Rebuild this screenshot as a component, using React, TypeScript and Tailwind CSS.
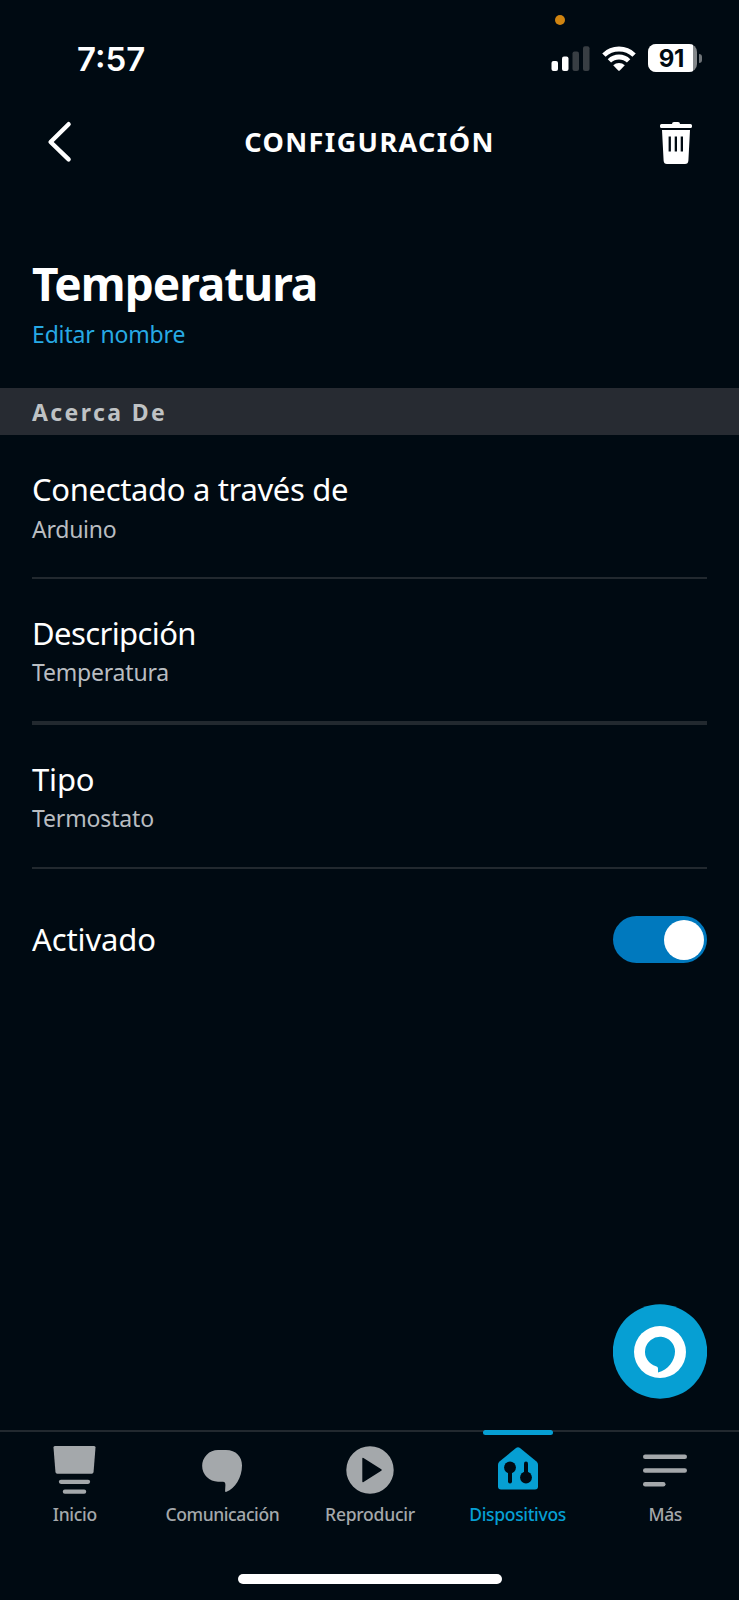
import React from "react";

const ember = "font-['Noto_Sans','Open_Sans',sans-serif]";

function StatusBar() {
  return (
    <div className="relative flex h-[118px] items-center pl-[77px] pr-[37px]">
      <span className="absolute left-[555px] top-[14.5px] size-[10px] rounded-full bg-[#d08410]" />
      <span className="flex-1 whitespace-nowrap font-['Inter',sans-serif] text-[33px] font-semibold leading-none tracking-[0px]">7:57</span>
      <svg className="mr-[12px]" width="39" height="26" viewBox="0 0 39 26">
        <rect x="0.5" y="15" width="6.5" height="10" rx="2" fill="#fff" />
        <rect x="11" y="10.5" width="6.5" height="14.5" rx="2" fill="#fff" />
        <rect x="21.5" y="5.5" width="6.5" height="19.5" rx="2" fill="#383e43" />
        <rect x="32" y="0.3" width="6.5" height="24.7" rx="2" fill="#383e43" />
      </svg>
      <svg className="mr-[12px]" width="34" height="26" viewBox="0 0 34 26">
        <g fill="none" stroke="#fff" strokeWidth="4.8">
          <path d="M1.9 9.1a21.7 21.7 0 0 1 30.2 0" />
          <path d="M7.4 14.9a13.8 13.8 0 0 1 19.2 0" />
        </g>
        <path d="M11.2 19.2a8.4 8.4 0 0 1 11.6 0L17.8 24.5Q17 25.2 16.2 24.5Z" fill="#fff" />
      </svg>
      <div className="mb-[2px] flex items-center">
        <div className="h-[28px] w-[49px] overflow-hidden rounded-[8px] bg-[#83878a]">
          <div className="flex h-full w-[45px] items-center justify-center bg-white pl-[2px] pt-[1px] font-['Inter',sans-serif] text-[24px] font-bold leading-none tracking-[-0.2px] text-[#000a12]">
            91
          </div>
        </div>
        <div className="ml-[2px] h-[9px] w-[3px] rounded-r-full bg-[#6f7478]" />
      </div>
    </div>
  );
}

function Header() {
  return (
    <header className="grid h-[48px] grid-cols-[100px_1fr_100px] items-center">
      <svg className="ml-[47px]" width="26" height="42" viewBox="0 0 26 42">
        <path d="M21.600 3.200 3.600 21 21.600 38.400" fill="none" stroke="#fff" strokeWidth="4.400" strokeLinecap="round" strokeLinejoin="round" />
      </svg>
      <h1 className="mb-[2px] text-center text-[27px] font-bold leading-none tracking-[1.4px]">CONFIGURACIÓN</h1>
      <svg className="ml-[21px] mt-[2px]" width="32" height="42" viewBox="0 0 32 42">
        <path fill="#fff" fillRule="evenodd" d="M12 2Q12 0 14 0H18Q20 0 20 2H30.500Q32 2 32 3.500V4.500Q32 6 30.500 6H1.500Q0 6 0 4.500V3.500Q0 2 1.500 2ZM2 8H30L28.400 38.500Q28.200 42 25 42H7Q3.800 42 3.600 38.500ZM8.600 14.500V29.500H10.900V14.500ZM14.700 14.500V29.500H17V14.500ZM20.700 14.500V29.500H23V14.500Z" />
      </svg>
    </header>
  );
}

function InfoRow({ label, value, className, labelClass, valueClass }: { label: string; value: string; className: string; labelClass: string; valueClass: string }) {
  return (
    <div className={`mx-[32px] border-[#22292f] pt-[34px] ${className}`}>
      <div className={`whitespace-nowrap text-[31px] leading-[40px] ${labelClass}`}>{label}</div>
      <div className={`whitespace-nowrap text-[23px] leading-[32px] text-[#b9bdc1] ${valueClass}`}>{value}</div>
    </div>
  );
}

function Tab({ label, children, active = false, labelClass }: { label: string; children: React.ReactNode; active?: boolean; labelClass: string }) {
  return (
    <div className={`relative flex flex-1 flex-col items-center ${active ? "text-[#069fd3]" : "text-[#a4a8ab]"}`}>
      {active && <span className="absolute -top-[2px] h-[5px] w-[70px] rounded-full bg-[#069fd3]" />}
      <div className="mt-[13px] flex h-[50px] items-center justify-center">{children}</div>
      <div className={`mt-[7px] whitespace-nowrap text-[17.5px] font-medium leading-[24px] ${labelClass}`}>{label}</div>
    </div>
  );
}

export default function App() {
  return (
    <div className={`flex h-[1600px] w-[739px] flex-col bg-[#000a12] text-white ${ember}`}>
      <StatusBar />
      <Header />
      <main className="flex flex-1 flex-col">
        <section className="px-[32px] pt-[92px]">
          <h2 className="whitespace-nowrap text-[46px] font-bold leading-[50px] tracking-[-1px]">Temperatura</h2>
          <div className="mt-[10px] whitespace-nowrap text-[23px] leading-[32px] tracking-[-0.16px] text-[#27a9e4]">Editar nombre</div>
        </section>
        <div className="mt-[38px] flex h-[47px] items-center bg-[#272b32] px-[32px] pt-px text-[23px] font-bold tracking-[2.4px] text-[#bfc2c4]">Acerca De</div>
        <InfoRow label="Conectado a través de" value="Arduino" className="h-[144px] border-b-2" labelClass="tracking-[-0.34px]" valueClass="mt-[4px] tracking-[-0.25px]" />
        <InfoRow label="Descripción" value="Temperatura" className="h-[146px] border-b-4" labelClass="tracking-[-0.6px]" valueClass="mt-[3px] tracking-[-0.2px]" />
        <InfoRow label="Tipo" value="Termostato" className="h-[144px] border-b-2" labelClass="tracking-[-0.15px]" valueClass="mt-[3px] tracking-[-0.15px]" />
        <div className="mx-[32px] flex h-[141px] items-center justify-between">
          <span className="mb-px text-[31px] tracking-[-0.12px]">Activado</span>
          <div className="flex h-[47px] w-[94px] items-center justify-end rounded-full bg-[#0079be] pr-[3.5px]">
            <span className="size-[40px] rounded-full bg-white" />
          </div>
        </div>
        <div className="mb-[31px] mr-[32px] mt-auto self-end">
          <svg width="94" height="95" viewBox="0 0 94 95">
            <circle cx="47" cy="47.500" r="47.200" fill="#069fd3" />
            <circle cx="47" cy="48" r="26" fill="#fff" />
            <path d="M45 68.500V64.500Q45 62.600 43 62.200A15 15 0 1 1 62 47.500C62 56.500 55 66 45 68.500Z" fill="#069fd3" />
          </svg>
        </div>
      </main>
      <nav className="flex h-[144px] border-t-2 border-[#22292f] pl-px">
        <Tab label="Inicio" labelClass="tracking-[-0.3px]">
          <svg width="43" height="48" viewBox="0 0 44 48" preserveAspectRatio="none" fill="currentColor">
            <path d="M2 0H42Q43.600 0 43.500 1.600L41.500 26Q41.300 27.800 39.600 27.800H4.400Q2.700 27.800 2.500 26L.5 1.600Q.4 0 2 0Z" />
            <rect x="6" y="33.700" width="32" height="4.200" rx="2.100" />
            <rect x="10" y="43.600" width="24" height="4.200" rx="2.100" />
          </svg>
        </Tab>
        <Tab label="Comunicación" labelClass="tracking-[-0.4px]">
          <svg className="mt-[2px]" width="40" height="42" viewBox="0 0 40 42" fill="currentColor">
            <path d="M16 0H24C34 0 40 6.500 40 15.500C40 27.500 33 38.500 24.500 41.800Q23 42.300 23.100 40.800L23.400 35Q23.400 31.700 21 31.700H16A15.850 15.850 0 0 1 16 0Z" />
          </svg>
        </Tab>
        <Tab label="Reproducir" labelClass="tracking-[-0.25px]">
          <svg width="48" height="48" viewBox="0 0 48 48" fill="currentColor">
            <path fillRule="evenodd" d="M24 .3A23.700 23.700 0 1 0 24 47.700A23.700 23.700 0 1 0 24 .3ZM16.300 12.700Q16.300 11.300 17.500 12L35.300 23.200Q36.400 24 35.300 24.800L17.500 36Q16.300 36.700 16.300 35.300Z" />
          </svg>
        </Tab>
        <Tab label="Dispositivos" active labelClass="tracking-[-0.32px]">
          <svg className="-mt-[3px]" width="40" height="43" viewBox="0 0 40 43">
            <path d="M18 1Q20 -.5 22 1L38.500 14.500Q40 15.800 40 17.500V39.500Q40 42.500 37 42.500H3Q0 42.500 0 39.500V17.500Q0 15.800 1.500 14.500Z" fill="currentColor" />
            <g fill="#000a12">
              <circle cx="12" cy="20.500" r="5.900" />
              <rect x="10" y="20" width="4" height="16.500" rx="2" />
              <circle cx="28" cy="30.500" r="5.900" />
              <rect x="26" y="14.500" width="4" height="16.500" rx="2" />
            </g>
          </svg>
        </Tab>
        <Tab label="Más" labelClass="tracking-[-0.4px]">
          <svg width="44" height="33" viewBox="0 0 44 33" fill="currentColor">
            <rect x="0" y=".5" width="44" height="4.400" rx="2.200" />
            <rect x="0" y="14.300" width="44" height="4.400" rx="2.200" />
            <rect x="0" y="28" width="22.500" height="4.400" rx="2.200" />
          </svg>
        </Tab>
      </nav>
      <div className="flex h-[26px] items-start justify-center">
        <div className="h-[10px] w-[264px] rounded-full bg-white" />
      </div>
    </div>
  );
}
